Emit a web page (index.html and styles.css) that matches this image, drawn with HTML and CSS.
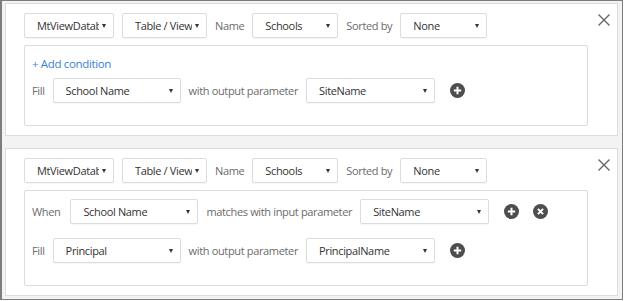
FILE: index.html
```html
<!DOCTYPE html>
<html>
<head>
<meta charset="utf-8">
<link rel="stylesheet" href="styles.css">
</head>
<body>
<div class="frame">
  <div class="card card-first">
    <div class="head">
      <div class="sel w90"><span class="val">MtViewDatabase</span><i class="caret"></i></div>
      <div class="sel w85"><span class="val">Table / View</span><i class="caret"></i></div>
      <span class="lbl">Name</span>
      <div class="sel w86"><span class="val">Schools</span><i class="caret"></i></div>
      <span class="lbl">Sorted by</span>
      <div class="sel w87"><span class="val">None</span><i class="caret"></i></div>
      <button class="close" aria-label="Close"><svg width="14" height="14" viewBox="0 0 14 14"><path d="M1.5 1.5 L12.5 12.5 M12.5 1.5 L1.5 12.5" stroke="#666" stroke-width="1.4" fill="none"/></svg></button>
    </div>
    <div class="box">
      <a class="add" href="#">+ Add condition</a>
      <div class="row row-link">
        <span class="lbl">Fill</span>
        <div class="sel w128"><span class="val">School Name</span><i class="caret"></i></div>
        <span class="lbl">with output parameter</span>
        <div class="sel w129"><span class="val">SiteName</span><i class="caret"></i></div>
        <span class="ic"><svg width="15" height="15" viewBox="0 0 15 15"><circle cx="7.5" cy="7.5" r="7.5" fill="#4d4d4d"/><path d="M7.5 3.8 V11.2 M3.8 7.5 H11.2" stroke="#fff" stroke-width="2"/></svg></span>
      </div>
    </div>
  </div>

  <div class="card">
    <div class="head">
      <div class="sel w90"><span class="val">MtViewDatabase</span><i class="caret"></i></div>
      <div class="sel w85"><span class="val">Table / View</span><i class="caret"></i></div>
      <span class="lbl">Name</span>
      <div class="sel w86"><span class="val">Schools</span><i class="caret"></i></div>
      <span class="lbl">Sorted by</span>
      <div class="sel w87"><span class="val">None</span><i class="caret"></i></div>
      <button class="close" aria-label="Close"><svg width="14" height="14" viewBox="0 0 14 14"><path d="M1.5 1.5 L12.5 12.5 M12.5 1.5 L1.5 12.5" stroke="#666" stroke-width="1.4" fill="none"/></svg></button>
    </div>
    <div class="box">
      <div class="row">
        <span class="lbl">When</span>
        <div class="sel w128 ml2"><span class="val">School Name</span><i class="caret"></i></div>
        <span class="lbl">matches with input parameter</span>
        <div class="sel w129"><span class="val">SiteName</span><i class="caret"></i></div>
        <span class="ic"><svg width="15" height="15" viewBox="0 0 15 15"><circle cx="7.5" cy="7.5" r="7.5" fill="#4d4d4d"/><path d="M7.5 3.8 V11.2 M3.8 7.5 H11.2" stroke="#fff" stroke-width="2"/></svg></span>
        <span class="ic ic2"><svg width="15" height="15" viewBox="0 0 15 15"><circle cx="7.5" cy="7.5" r="7.5" fill="#4d4d4d"/><path d="M4.9 4.9 L10.1 10.1 M10.1 4.9 L4.9 10.1" stroke="#fff" stroke-width="2"/></svg></span>
      </div>
      <div class="row row-second">
        <span class="lbl">Fill</span>
        <div class="sel w128"><span class="val">Principal</span><i class="caret"></i></div>
        <span class="lbl">with output parameter</span>
        <div class="sel w129"><span class="val">PrincipalName</span><i class="caret"></i></div>
        <span class="ic"><svg width="15" height="15" viewBox="0 0 15 15"><circle cx="7.5" cy="7.5" r="7.5" fill="#4d4d4d"/><path d="M7.5 3.8 V11.2 M3.8 7.5 H11.2" stroke="#fff" stroke-width="2"/></svg></span>
      </div>
    </div>
  </div>
</div>
</body>
</html>
```

FILE: styles.css
```css
* { box-sizing: border-box; }
html, body { margin: 0; padding: 0; background: #fff; }
body {
  font-family: "Open Sans", "Segoe UI", Arial, sans-serif;
  font-size: 11px;
  letter-spacing: -0.35px;
  color: #666;
}
.frame {
  width: 623px;
  height: 300px;
  border: 1px solid #7d7d7d;
  border-left-width: 2px;
  background: #f3f3f3;
  padding: 2px 4px 0 3px;
  display: flex;
  flex-direction: column;
  gap: 12px;
}
.card {
  background: #fff;
  border: 1px solid #dcdcdc;
  padding: 9px 6px 9px 18px;
}
.head {
  display: flex;
  align-items: center;
  gap: 8px;
  height: 25px;
}
.lbl { white-space: nowrap; color: #6b6b6b; }
.sel {
  height: 25px;
  border: 1px solid #dcdcdc;
  border-radius: 2px;
  background: #fff;
  display: flex;
  align-items: center;
  padding: 0 7px 0 12px;
  color: #333;
  flex: none;
  box-shadow: 0 1px 1px rgba(0,0,0,0.04);
}
.val {
  flex: 1;
  overflow: hidden;
  white-space: nowrap;
  min-width: 0;
}
.caret {
  flex: none;
  width: 0; height: 0;
  border-left: 2.5px solid transparent;
  border-right: 2.5px solid transparent;
  border-top: 4px solid #333;
  margin-left: 3px;
}
.w90 { width: 90px; }
.w85 { width: 85px; }
.w86 { width: 86px; }
.w87 { width: 87px; }
.w128 { width: 128px; }
.w129 { width: 129px; }
.ml2 { margin-left: 2px; }
.close {
  margin-left: auto;
  border: 0;
  background: none;
  padding: 0;
  width: 14px;
  height: 14px;
  align-self: flex-start;
  margin-top: 0;
  display: flex;
}
.box {
  margin-top: 7px;
  margin-right: 23px;
  border: 1px solid #dcdcdc;
  border-radius: 2px;
  padding: 8px 7px 22px 7px;
}
.add {
  display: block;
  color: #3b7fd9;
  text-decoration: none;
  font-size: 11.5px;
  line-height: 20px;
}
.row {
  display: flex;
  align-items: center;
  gap: 8px;
  height: 25px;
}
.row-link { margin-top: 4px; }
.row-second { margin-top: 14px; }
.ic { display: flex; margin-left: 7px; }
.ic2 { margin-left: 6px; }
```
